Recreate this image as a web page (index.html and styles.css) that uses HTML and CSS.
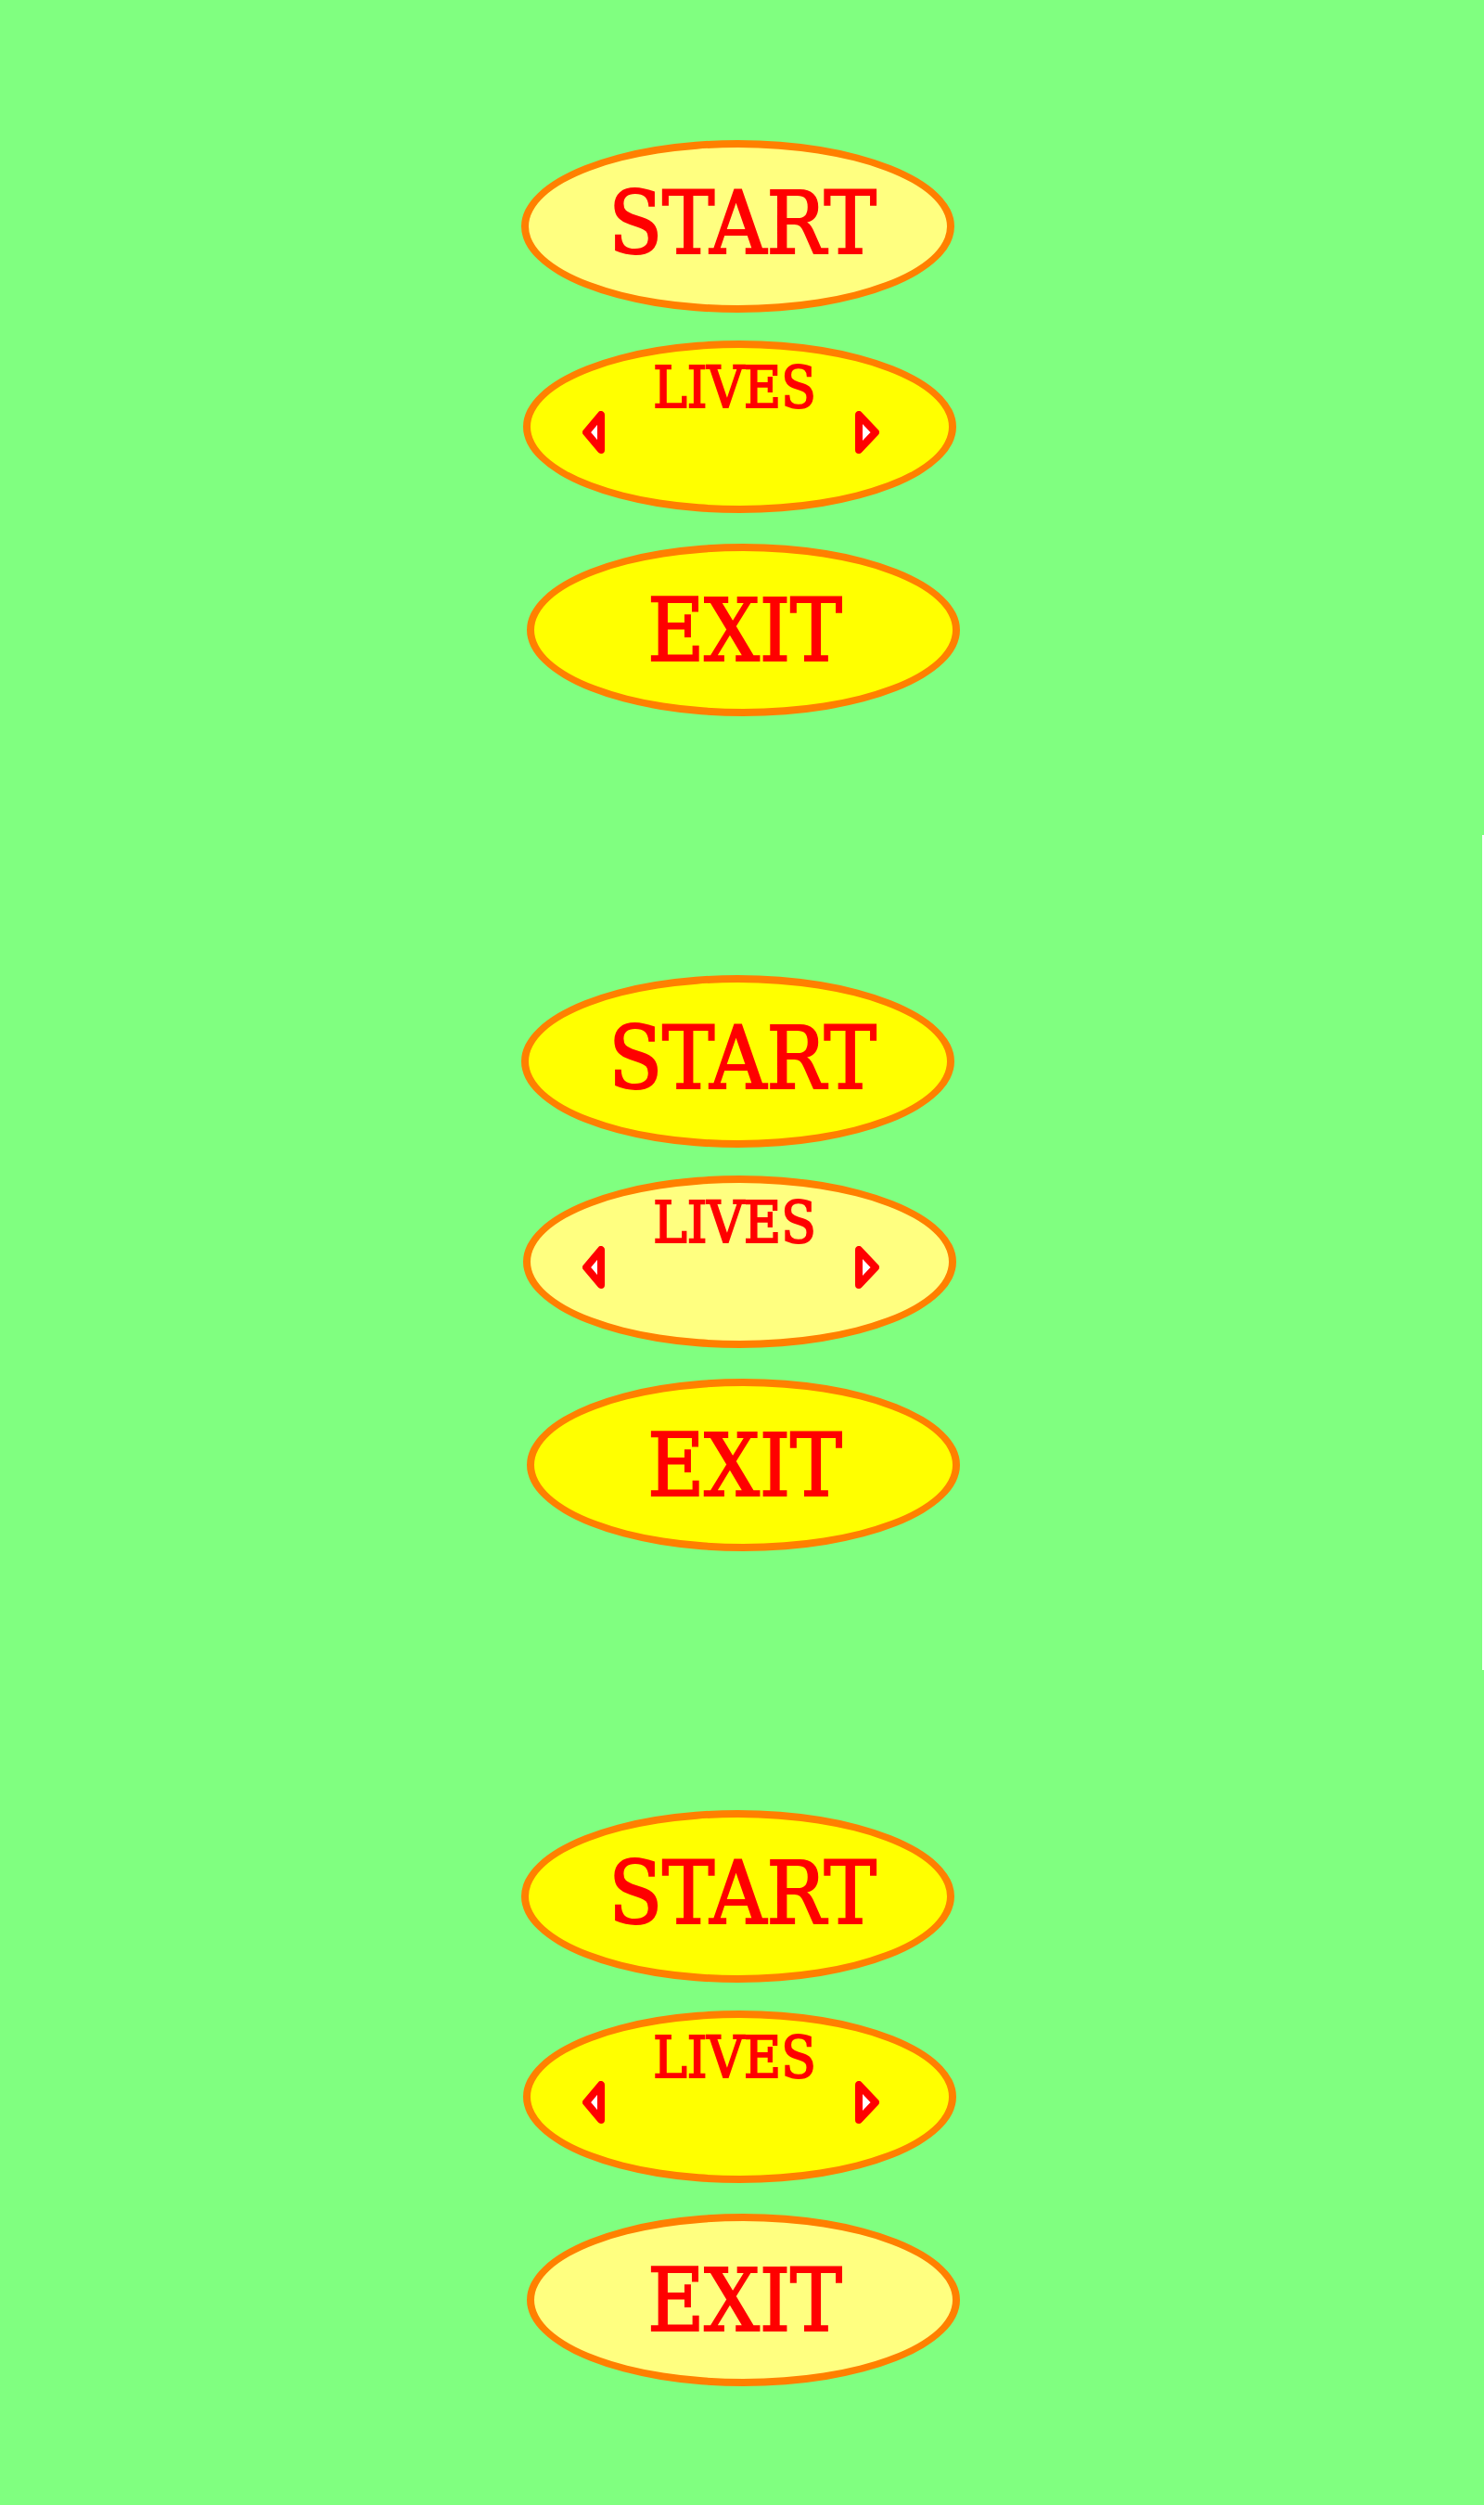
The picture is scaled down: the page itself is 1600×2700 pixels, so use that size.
FILE: index.html
```html
<!DOCTYPE html>
<html lang="en">
<head>
<meta charset="utf-8">
<title>Menu</title>
<link rel="stylesheet" href="styles.css">
</head>
<body>
  <section class="panel">
    <nav class="menu">
      <div class="btn btn-start is-active"><span class="label">START</span></div>
      <div class="btn btn-lives">
        <span class="label">LIVES</span>
        <div class="arrows">
          <svg class="arrow" width="24" height="46" viewBox="0 0 24 46"><polygon points="20,4 20,42 4,23"/></svg>
          <svg class="arrow" width="26" height="46" viewBox="0 0 26 46"><polygon points="4,4 4,42 22,23"/></svg>
        </div>
      </div>
      <div class="btn btn-exit"><span class="label">EXIT</span></div>
    </nav>
  </section>
  <section class="panel panel-mid">
    <nav class="menu">
      <div class="btn btn-start"><span class="label">START</span></div>
      <div class="btn btn-lives is-active">
        <span class="label">LIVES</span>
        <div class="arrows">
          <svg class="arrow" width="24" height="46" viewBox="0 0 24 46"><polygon points="20,4 20,42 4,23"/></svg>
          <svg class="arrow" width="26" height="46" viewBox="0 0 26 46"><polygon points="4,4 4,42 22,23"/></svg>
        </div>
      </div>
      <div class="btn btn-exit"><span class="label">EXIT</span></div>
    </nav>
  </section>
  <section class="panel">
    <nav class="menu">
      <div class="btn btn-start"><span class="label">START</span></div>
      <div class="btn btn-lives">
        <span class="label">LIVES</span>
        <div class="arrows">
          <svg class="arrow" width="24" height="46" viewBox="0 0 24 46"><polygon points="20,4 20,42 4,23"/></svg>
          <svg class="arrow" width="26" height="46" viewBox="0 0 26 46"><polygon points="4,4 4,42 22,23"/></svg>
        </div>
      </div>
      <div class="btn btn-exit is-active"><span class="label">EXIT</span></div>
    </nav>
  </section>
</body>
</html>
```

FILE: styles.css
```css
html, body {
  margin: 0;
  padding: 0;
  background: #ffffff;
}

.panel {
  width: 1600px;
  height: 900px;
  background: #80ff80;
  overflow: hidden;
}

.panel-mid {
  width: 1598px;
}

.menu {
  display: flex;
  flex-direction: column;
  align-items: flex-start;
  padding-top: 151px;
  padding-left: 562px;
}

.btn {
  box-sizing: border-box;
  width: 467px;
  height: 186px;
  border: 8px solid #ff8000;
  border-radius: 50%;
  background: #ffff00;
  color: #ff0000;
  font-family: "DejaVu Serif Condensed", "DejaVu Serif", serif;
  font-stretch: condensed;
  text-align: center;
  -webkit-text-stroke: 2px #ff0000;
}

.btn.is-active {
  background: #ffff80;
}

.label {
  display: block;
  line-height: 1;
}

.btn-start {
  padding: 35px 0 0 10px;
  font-size: 94px;
}

.btn-lives {
  margin-top: 30px;
  margin-left: 2px;
  padding-top: 18px;
  font-size: 61px;
}

.btn-lives .label {
  line-height: 50px;
  padding-right: 11px;
}

.btn-exit {
  margin-top: 33px;
  margin-left: 6px;
  padding: 40px 0 0 3px;
  font-size: 93px;
}

.arrows {
  display: flex;
  justify-content: space-between;
  align-items: flex-start;
  padding: 0 75px 0 56px;
}

.arrow {
  display: block;
}

.arrow polygon {
  fill: #ffffff;
  stroke: #ff0000;
  stroke-width: 8;
  stroke-linejoin: round;
}
```
